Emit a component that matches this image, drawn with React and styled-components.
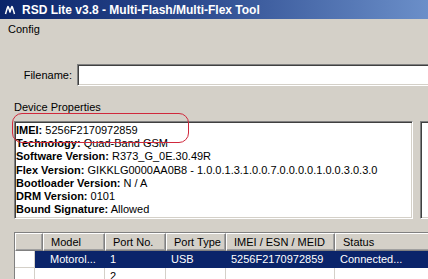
import styled, { createGlobalStyle } from "styled-components";

const GlobalStyle = createGlobalStyle`
  html, body {
    margin: 0;
    padding: 0;
    background: #d4d0c8;
    overflow: hidden;
  }
  body {
    font-family: "Liberation Sans", Arial, sans-serif;
    font-size: 11px;
    color: #000;
  }
`;

const Window = styled.div`
  width: 428px;
  height: 279px;
  display: flex;
  flex-direction: column;
  background: #d4d0c8;
  overflow: hidden;
  & > * {
    flex-shrink: 0;
  }
`;

const TitleBar = styled.div`
  height: 19px;
  display: flex;
  align-items: center;
  gap: 6px;
  padding-left: 4px;
  background: linear-gradient(90deg, #0a246a 0%, #2c4a8e 45%, #6b8fc9 100%);
  color: #fff;
  font-weight: bold;
  font-size: 12px;
  white-space: nowrap;
`;

const MenuBar = styled.div`
  height: 19px;
  display: flex;
  align-items: center;
  padding-left: 8px;
`;

const Body = styled.div`
  display: flex;
  flex-direction: column;
  padding-left: 14px;
`;

const FieldRow = styled.div`
  display: flex;
  align-items: center;
  margin-top: 26px;
`;

const FieldLabel = styled.label`
  width: 58px;
  margin-right: 5px;
  text-align: right;
`;

const sunken = `
  border-style: solid;
  border-width: 1px;
  border-color: #808080 #ffffff #ffffff #808080;
  box-shadow: inset 1px 1px 0 #404040, inset -1px -1px 0 #d4d0c8;
  background: #fff;
  box-sizing: border-box;
`;

const TextInput = styled.div`
  ${sunken}
  flex: 1;
  height: 22px;
  margin-right: -4px;
`;

const Section = styled.div`
  position: relative;
  display: flex;
  flex-direction: column;
`;

const GroupLabel = styled.div`
  margin-top: 15px;
  height: 13px;
  line-height: 13px;
`;

const PropsRow = styled.div`
  display: flex;
  margin-top: 7px;
  gap: 7px;
`;

const PropsBox = styled.div`
  ${sunken}
  width: 399px;
  height: 98px;
  padding: 2px 1px;
  font-size: 11px;
  white-space: nowrap;
  overflow: hidden;
`;

const SidePanel = styled.div`
  ${sunken}
  flex: 1;
  height: 98px;
  margin-right: -10px;
`;

const PropLine = styled.div`
  line-height: 13.2px;
  b {
    font-weight: bold;
  }
`;

const Highlight = styled.div`
  position: absolute;
  left: -2px;
  top: 27px;
  width: 175px;
  height: 28px;
  border: 1px solid #d0283c;
  border-radius: 10px;
  pointer-events: none;
`;

const List = styled.div`
  ${sunken}
  margin-top: 13px;
  margin-right: -10px;
  height: 70px;
  display: flex;
  flex-direction: column;
`;

const Row = styled.div`
  display: grid;
  grid-template-columns: ${(p) => p.$cols};
  height: ${(p) => p.$h}px;
  flex-shrink: 0;
`;

const HeadCell = styled.div`
  display: flex;
  align-items: center;
  padding-left: 7px;
  background: #d4d0c8;
  border-style: solid;
  border-width: 1px;
  border-color: #ffffff #808080 #808080 #ffffff;
  box-shadow: inset -1px -1px 0 #a0a0a0;
  box-sizing: border-box;
  white-space: nowrap;
  overflow: hidden;
`;

const Cell = styled.div`
  display: flex;
  align-items: center;
  padding-left: ${(p) => p.$pad ?? 5}px;
  background: ${(p) => (p.$sel ? "#0a246a" : "#fff")};
  color: ${(p) => (p.$sel ? "#fff" : "#000")};
  border-right: 1px solid ${(p) => (p.$sel ? "#0a246a" : "#d4d0c8")};
  border-bottom: 1px solid ${(p) => (p.$sel ? "#0a246a" : "#d4d0c8")};
  white-space: nowrap;
  overflow: hidden;
  box-sizing: border-box;
`;

const MotoLogo = () => (
  <svg width="12" height="12" viewBox="0 0 12 12">
    <path
      d="M1.5 10 C2.5 7 3 4 4 2.5 C5 4 5.5 6 6 8 C6.5 6 7 4 8 2.5 C9 4 9.5 7 10.5 10"
      fill="none"
      stroke="#fff"
      strokeWidth="1.5"
      strokeLinejoin="round"
    />
  </svg>
);

const props = [
  ["IMEI:", "5256F2170972859"],
  ["Technology:", "Quad-Band GSM"],
  ["Software Version:", "R373_G_0E.30.49R"],
  ["Flex Version:", "GIKKLG0000AA0B8 - 1.0.0.1.3.1.0.0.7.0.0.0.0.1.0.0.3.0.3.0"],
  ["Bootloader Version:", "N / A"],
  ["DRM Version:", "0101"],
  ["Bound Signature:", "Allowed"],
];

const headCols = "28px 62px 61px 60px 109px 1fr";
const dataCols = "20px 70px 61px 60px 109px 1fr";

const headers = ["", "Model", "Port No.", "Port Type", "IMEI / ESN / MEID", "Status"];
const rows = [
  ["Motorol...", "1", "USB", "5256F2170972859", "Connected..."],
  ["", "2", "", "", ""],
];

export default function App() {
  return (
    <Window>
      <GlobalStyle />
      <TitleBar>
        <MotoLogo />
        RSD Lite v3.8 - Multi-Flash/Multi-Flex Tool
      </TitleBar>
      <MenuBar>Config</MenuBar>
      <Body>
        <FieldRow>
          <FieldLabel>Filename:</FieldLabel>
          <TextInput />
        </FieldRow>
        <Section>
          <GroupLabel>Device Properties</GroupLabel>
          <PropsRow>
            <PropsBox>
              {props.map(([k, v]) => (
                <PropLine key={k}>
                  <b>{k}</b> {v}
                </PropLine>
              ))}
            </PropsBox>
            <SidePanel />
          </PropsRow>
          <Highlight />
        </Section>
        <List>
          <Row $cols={headCols} $h={18}>
            {headers.map((h, i) => (
              <HeadCell key={i}>{h}</HeadCell>
            ))}
          </Row>
          {rows.map((r, ri) => (
            <Row key={ri} $cols={dataCols} $h={17}>
              <Cell />
              {r.map((c, ci) => (
                <Cell key={ci} $sel={ri === 0} $pad={ci === 0 ? 15 : 5}>
                  {c}
                </Cell>
              ))}
            </Row>
          ))}
        </List>
      </Body>
    </Window>
  );
}
